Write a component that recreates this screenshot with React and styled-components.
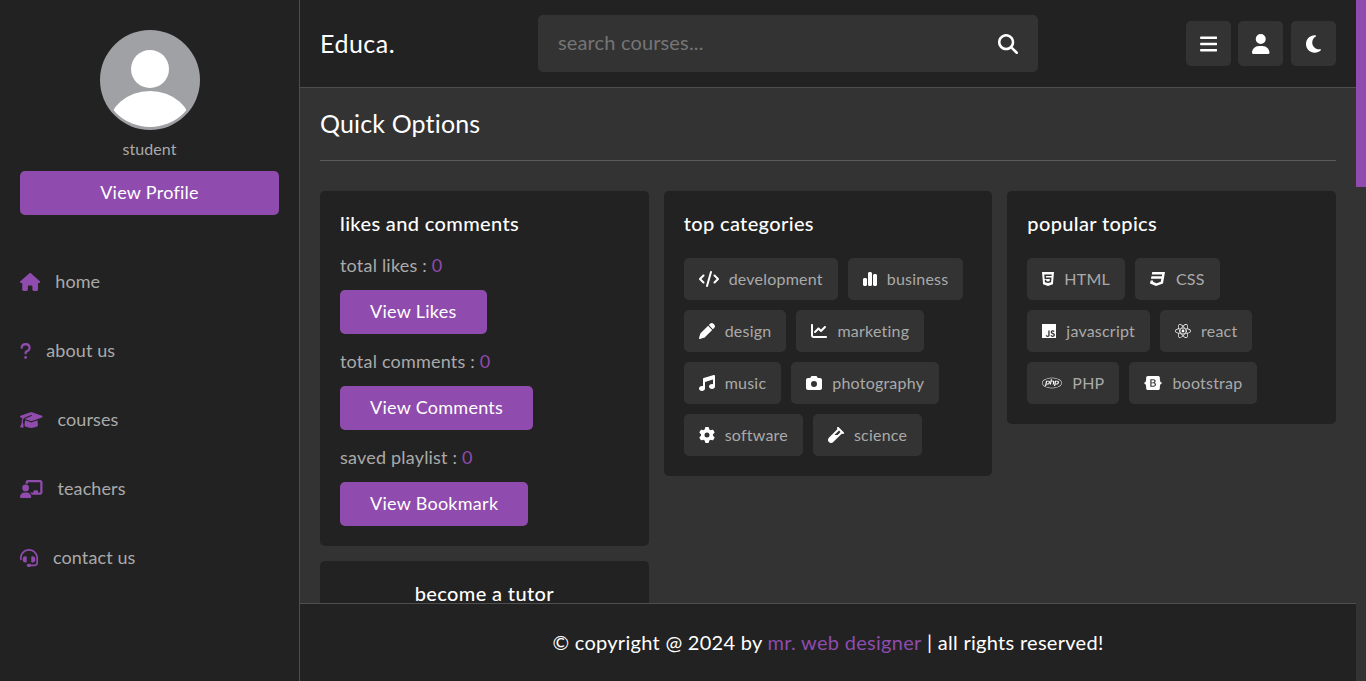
import React from "react";
import styled, { createGlobalStyle } from "styled-components";
import {
  FaHouse, FaQuestion, FaGraduationCap, FaChalkboardUser, FaHeadset,
  FaBars, FaUser, FaMoon, FaMagnifyingGlass, FaCode, FaChartSimple, FaPen,
  FaChartLine, FaMusic, FaCamera, FaGear, FaVial, FaHtml5, FaCss3, FaJs,
  FaReact, FaPhp, FaBootstrap,
} from "react-icons/fa6";

const purple = "#8f4bad";
const dark = "#222";
const mid = "#333";
const light = "#aaa";
const line = "rgba(255,255,255,.2)";

const GlobalStyle = createGlobalStyle`
  * { box-sizing: border-box; margin: 0; padding: 0; }
  html, body { height: 100%; overflow: hidden; background: ${mid}; }
  body { font-family: "Lato", "Open Sans", sans-serif; color: #fff; }
`;

const Page = styled.div`
  display: grid;
  grid-template-columns: 300px 1fr 10px;
  height: 100vh;
`;

const Sidebar = styled.aside`
  background: ${dark};
  border-right: 1px solid ${line};
`;

const Profile = styled.div`
  display: flex;
  flex-direction: column;
  align-items: center;
  padding: 30px 20px;
`;

const Avatar = styled.svg`
  width: 100px;
  height: 100px;
  display: block;
`;

const Role = styled.p`
  font-size: 16px;
  line-height: 22px;
  margin: 8px 0 2px;
  color: ${light};
  letter-spacing: 0.1px;
`;

const Button = styled.a`
  display: ${(p) => (p.$block ? "flex" : "inline-flex")};
  justify-content: center;
  align-items: center;
  height: 44px;
  padding: 0 30px 2px;
  margin-top: ${(p) => (p.$block ? "9px" : "0")};
  width: ${(p) => (p.$block ? "100%" : "auto")};
  background: ${purple};
  border-radius: 5px;
  font-size: 18px;
  letter-spacing: 0.27px;
  color: #fff;
`;

const Nav = styled.nav`
  display: flex;
  flex-direction: column;
  margin-top: 2px;
`;

const NavLink = styled.a`
  display: flex;
  align-items: center;
  height: 69px;
  padding: 0 20px;
  gap: 15px;
  font-size: 18px;
  letter-spacing: 0.1px;
  color: ${light};
  svg {
    height: 18px;
    width: ${(p) => p.$iconWidth}px;
    color: ${purple};
  }
`;

const NavLabel = styled.span`
  padding-bottom: 2px;
`;

const Main = styled.div`
  display: flex;
  flex-direction: column;
  min-width: 0;
  height: 100vh;
`;

const Header = styled.header`
  display: flex;
  align-items: center;
  justify-content: space-between;
  height: 88px;
  padding: 0 20px;
  background: ${dark};
  border-bottom: 1px solid ${line};
  flex: none;
`;

const Logo = styled.a`
  font-size: 25px;
  letter-spacing: 0.5px;
  padding-bottom: 2px;
  color: #fff;
`;

const Search = styled.form`
  display: flex;
  align-items: center;
  justify-content: space-between;
  width: 500px;
  height: 57px;
  padding: 0 20px;
  margin-right: 5px;
  background: ${mid};
  border-radius: 5px;
  color: #fff;
  svg {
    font-size: 20px;
  }
`;

const SearchInput = styled.input`
  flex: 1;
  background: none;
  border: none;
  outline: none;
  font: inherit;
  font-size: 20px;
  letter-spacing: 0.15px;
  padding-bottom: 3px;
  color: #fff;
  &::placeholder {
    color: #757575;
    opacity: 1;
  }
`;

const Icons = styled.div`
  display: flex;
  gap: 7.6px;
`;

const IconButton = styled.div`
  display: flex;
  align-items: center;
  justify-content: center;
  width: 45px;
  height: 45px;
  background: ${mid};
  border-radius: 5px;
  color: #fff;
  svg {
    height: 20px;
    width: ${(p) => p.$iconWidth}px;
  }
`;

const Content = styled.main`
  flex: 1;
  min-height: 0;
  overflow: hidden;
  padding: 20px;
`;

const Heading = styled.h1`
  font-size: 25px;
  font-weight: 400;
  line-height: 31px;
  letter-spacing: 0.15px;
  padding-bottom: 21px;
  margin-bottom: 30px;
  border-bottom: 1px solid ${line};
`;

const Boxes = styled.div`
  display: grid;
  grid-template-columns: repeat(3, 1fr);
  gap: 15px;
  align-items: start;
`;

const Column = styled.div`
  display: flex;
  flex-direction: column;
  gap: 15px;
`;

const Box = styled.section`
  background: ${dark};
  border-radius: 5px;
  padding: 20px;
  text-align: ${(p) => (p.$center ? "center" : "left")};
`;

const BoxTitle = styled.h3`
  font-size: 20px;
  font-weight: 500;
  line-height: 25px;
  letter-spacing: 0.36px;
  margin-bottom: 16px;
  color: #fff;
`;

const Stat = styled.div`
  margin-bottom: 14px;
  &:last-child {
    margin-bottom: 0;
  }
`;

const StatText = styled.p`
  font-size: 18px;
  line-height: 27px;
  letter-spacing: 0.2px;
  margin-bottom: 11px;
  color: ${light};
  span {
    color: ${purple};
  }
`;

const Tags = styled.div`
  display: flex;
  flex-wrap: wrap;
  gap: 10px;
  margin-top: 22px;
`;

const Tag = styled.a`
  display: inline-flex;
  align-items: center;
  gap: 10px;
  height: 42px;
  padding: 0 15px;
  background: ${mid};
  border-radius: 5px;
  font-size: 16px;
  letter-spacing: 0.22px;
  color: ${light};
  svg {
    height: 16px;
    width: ${(p) => p.$iconWidth}px;
    color: #fff;
  }
`;

const TagLabel = styled.span`
  padding-bottom: 2px;
`;

const Footer = styled.footer`
  flex: none;
  height: 78px;
  display: flex;
  align-items: center;
  justify-content: center;
  padding-bottom: 2px;
  background: ${dark};
  border-top: 1px solid ${line};
  font-size: 20px;
  letter-spacing: 0.29px;
  color: #fff;
  white-space: pre;
  span {
    color: ${purple};
  }
`;

const Rail = styled.div`
  background: ${mid};
`;

const Thumb = styled.div`
  height: 187px;
  background: ${purple};
`;

const navItems = [
  [FaHouse, "home", 20.25],
  [FaQuestion, "about us", 11.25],
  [FaGraduationCap, "courses", 22.5],
  [FaChalkboardUser, "teachers", 22.5],
  [FaHeadset, "contact us", 18],
];

const stats = [
  ["total likes", "View Likes"],
  ["total comments", "View Comments"],
  ["saved playlist", "View Bookmark"],
];

const categories = [
  [FaCode, "development", 20],
  [FaChartSimple, "business", 14],
  [FaPen, "design", 16],
  [FaChartLine, "marketing", 16],
  [FaMusic, "music", 16],
  [FaCamera, "photography", 16],
  [FaGear, "software", 16],
  [FaVial, "science", 16],
];

const topics = [
  [FaHtml5, "HTML", 12],
  [FaCss3, "CSS", 16],
  [FaJs, "javascript", 14],
  [FaReact, "react", 16],
  [FaPhp, "PHP", 20],
  [FaBootstrap, "bootstrap", 18],
];

const TagList = ({ items }) => (
  <Tags>
    {items.map(([Icon, label, width]) => (
      <Tag key={label} $iconWidth={width}>
        <Icon />
        <TagLabel>{label}</TagLabel>
      </Tag>
    ))}
  </Tags>
);

const App = () => {
  return (
    <Page>
      <GlobalStyle />
      <Sidebar>
        <Profile>
          <Avatar viewBox="0 0 100 100">
            <defs>
              <clipPath id="inner">
                <circle cx="50" cy="49" r="48" />
              </clipPath>
            </defs>
            <circle cx="50" cy="50" r="50" fill="#a0a1a5" />
            <circle cx="50" cy="39" r="19" fill="#fff" />
            <ellipse cx="50" cy="98" rx="42" ry="37" fill="#fff" clipPath="url(#inner)" />
          </Avatar>
          <Role>student</Role>
          <Button $block>View Profile</Button>
        </Profile>
        <Nav>
          {navItems.map(([Icon, label, width]) => (
            <NavLink key={label} $iconWidth={width}>
              <Icon />
              <NavLabel>{label}</NavLabel>
            </NavLink>
          ))}
        </Nav>
      </Sidebar>

      <Main>
        <Header>
          <Logo>Educa.</Logo>
          <Search>
            <SearchInput placeholder="search courses..." />
            <FaMagnifyingGlass />
          </Search>
          <Icons>
            <IconButton $iconWidth={17.5}><FaBars /></IconButton>
            <IconButton $iconWidth={17.5}><FaUser /></IconButton>
            <IconButton $iconWidth={15}><FaMoon /></IconButton>
          </Icons>
        </Header>

        <Content>
          <Heading>Quick Options</Heading>
          <Boxes>
            <Column>
              <Box>
                <BoxTitle>likes and comments</BoxTitle>
                {stats.map(([label, action]) => (
                  <Stat key={label}>
                    <StatText>{label} : <span>0</span></StatText>
                    <Button>{action}</Button>
                  </Stat>
                ))}
              </Box>
              <Box $center>
                <BoxTitle>become a tutor</BoxTitle>
              </Box>
            </Column>
            <Box>
              <BoxTitle>top categories</BoxTitle>
              <TagList items={categories} />
            </Box>
            <Box>
              <BoxTitle>popular topics</BoxTitle>
              <TagList items={topics} />
            </Box>
          </Boxes>
        </Content>

        <Footer>
          © copyright @ 2024 by <span>mr. web designer</span> | all rights reserved!
        </Footer>
      </Main>

      <Rail>
        <Thumb />
      </Rail>
    </Page>
  );
};

export default App;
